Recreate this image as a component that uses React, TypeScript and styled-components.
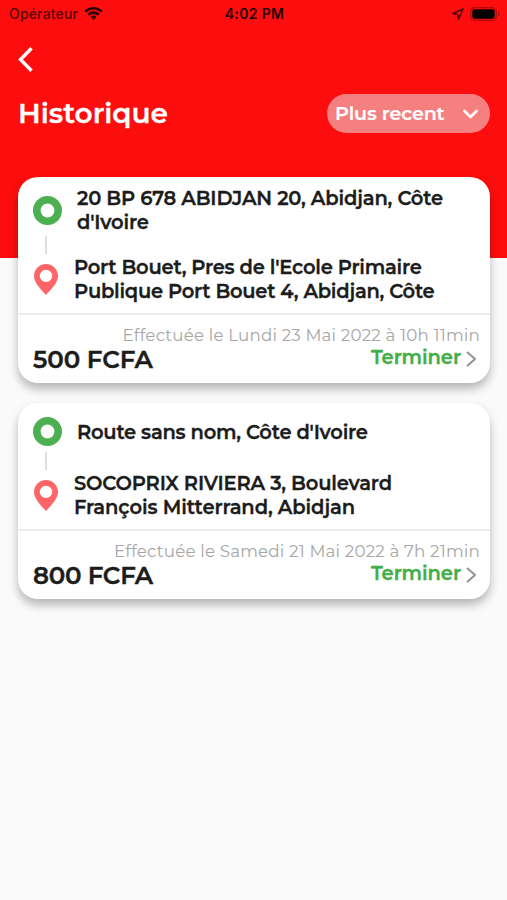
import React from "react";
import styled, { createGlobalStyle } from "styled-components";

const GlobalStyle = createGlobalStyle`
  * { box-sizing: border-box; }
  body { margin: 0; background: #fafafa; font-family: Montserrat, Inter, sans-serif; color: #1c1c1c; }
`;

const Screen = styled.main`
  min-height: 900px;
  background: linear-gradient(#fd0d0d 258px, #fafafa 258px);
`;

const StatusBar = styled.div`
  display: grid;
  grid-template-columns: 1fr auto 1fr;
  align-items: center;
  height: 27px;
  padding: 0 7px 0 9px;
  font: 500 14px/27px Inter, sans-serif;
`;

const Carrier = styled.div`
  display: flex;
  align-items: center;
  gap: 6px;
  letter-spacing: 0.17px;
  color: #5c0505;
`;

const Clock = styled.div`
  font-weight: 600;
  letter-spacing: 0.35px;
  color: #260000;
`;

const Indicators = styled.div`
  display: flex;
  align-items: center;
  justify-content: flex-end;
  gap: 6px;
`;

const BackButton = styled.button`
  display: block;
  width: 15px;
  height: 26px;
  margin: 19px 0 0 18px;
  padding: 0;
  border: 0;
  background: none;
  svg { display: block; }
`;

const TitleRow = styled.header`
  display: flex;
  align-items: center;
  justify-content: space-between;
  height: 39px;
  margin: 22px 17px 44px 18px;
  color: #fff;
`;

const Title = styled.h1`
  margin: 0;
  font-size: 28px;
  font-weight: 600;
  line-height: 39px;
  -webkit-text-stroke: 0.3px currentColor;
`;

const SortButton = styled.button`
  display: flex;
  align-items: center;
  justify-content: space-between;
  width: 163px;
  height: 39px;
  padding: 0 12px 0 8px;
  border: 0;
  border-radius: 20px;
  background: #f67f7f;
  color: #fff;
  font: 600 19px/38px Montserrat, Inter, sans-serif;
  letter-spacing: -0.1px;
  -webkit-text-stroke: 0.2px currentColor;
`;

const TripList = styled.section`
  display: flex;
  flex-direction: column;
  gap: 20px;
  padding: 0 17px 0 18px;
`;

const Card = styled.article`
  border-radius: 20px;
  background: #fff;
  box-shadow: 0 6px 10px rgba(0, 0, 0, 0.27);
`;

const Route = styled.div`
  display: grid;
  grid-template-columns: 56px 1fr;
  align-items: center;
  padding: 9px 0;
  border-bottom: 2px solid #ebebeb;
`;

const Marker = styled.div<{ $origin?: boolean }>`
  display: flex;
  justify-content: center;
  padding-left: ${(p) => (p.$origin ? 2 : 0)}px;
  svg { display: block; }
`;

const Connector = styled.div`
  grid-column: 1 / -1;
  width: 2px;
  height: 18px;
  margin: 1px 0 1px 27px;
  background: #dedede;
`;

const Address = styled.div<{ $lines: number; $origin?: boolean }>`
  display: flex;
  flex-direction: column;
  height: ${(p) => (p.$lines > 1 ? 49 : 39)}px;
  padding-top: ${(p) => (p.$lines > 1 ? 0 : 8)}px;
  padding-left: ${(p) => (p.$origin ? 3 : 0)}px;
  font-size: 19.5px;
  font-weight: 600;
  line-height: 24.4px;
  -webkit-text-stroke: 0.3px currentColor;
`;

const Line = styled.span<{ $track: number }>`
  align-self: flex-start;
  white-space: nowrap;
  letter-spacing: ${(p) => p.$track}px;
`;

const Footer = styled.footer`
  height: 68px;
  padding: 8px 10px 0 15px;
`;

const DateText = styled.div`
  height: 24px;
  text-align: right;
  white-space: nowrap;
  font-size: 16.7px;
  font-weight: 400;
  line-height: 24px;
  letter-spacing: 0.18px;
  color: #a6a6a6;
`;

const Summary = styled.div`
  display: flex;
  justify-content: space-between;
`;

const Amount = styled.div<{ $track: number }>`
  font-size: 24.5px;
  font-weight: 600;
  line-height: 24px;
  letter-spacing: ${(p) => p.$track}px;
  -webkit-text-stroke: 0.4px currentColor;
`;

const Status = styled.div`
  display: flex;
  align-items: center;
  gap: 5px;
  height: 20px;
  padding-right: 4px;
  color: #43ad49;
  font-size: 19.5px;
  font-weight: 600;
  letter-spacing: -0.1px;
  -webkit-text-stroke: 0.3px currentColor;
  svg { margin-top: 4px; }
`;

interface AddressLine {
  text: string;
  track: number;
}

interface Trip {
  from: AddressLine[];
  to: AddressLine[];
  date: string;
  amount: string;
  amountTrack: number;
}

const trips: Trip[] = [
  {
    from: [
      { text: "20 BP 678 ABIDJAN 20, Abidjan, Côte", track: -0.17 },
      { text: "d'Ivoire", track: -0.2 },
    ],
    to: [
      { text: "Port Bouet, Pres de l'Ecole Primaire", track: -0.23 },
      { text: "Publique Port Bouet 4, Abidjan, Côte", track: -0.25 },
    ],
    date: "Effectuée le Lundi 23 Mai 2022 à 10h 11min",
    amount: "500 FCFA",
    amountTrack: -0.05,
  },
  {
    from: [{ text: "Route sans nom, Côte d'Ivoire", track: -0.24 }],
    to: [
      { text: "SOCOPRIX RIVIERA 3, Boulevard", track: -0.17 },
      { text: "François Mitterrand, Abidjan", track: -0.11 },
    ],
    date: "Effectuée le Samedi 21 Mai 2022 à 7h 21min",
    amount: "800 FCFA",
    amountTrack: -0.26,
  },
];

const WifiIcon = () => (
  <svg width="19" height="14" viewBox="0 0 19 14" fill="none" stroke="#300" strokeWidth="2.7">
    <path d="M1.2 4.600a12 12 0 0 1 16.6 0M4.2 7.800a7.700 7.700 0 0 1 10.6 0" />
    <path d="M9.5 13 6.600 10a4.200 4.200 0 0 1 5.800 0z" fill="#300" stroke="none" />
  </svg>
);

const LocationIcon = () => (
  <svg width="12" height="12" viewBox="0 0 12 12" fill="none" stroke="#500" strokeWidth="1.5" strokeLinejoin="round">
    <path d="M11 1 1 5.500l4.600.9L6.600 11z" />
  </svg>
);

const BatteryIcon = () => (
  <svg width="30" height="14" viewBox="0 0 30 14">
    <rect x=".7" y=".7" width="25.600" height="12.600" rx="4" fill="none" stroke="#b00a0a" strokeWidth="1.2" />
    <rect x="2.300" y="2.300" width="22.400" height="9.400" rx="2.400" fill="#000" />
    <path d="M28 5v4q1.500-.6 1.500-2T28 5" fill="#b00a0a" />
  </svg>
);

const OriginIcon = () => (
  <svg width="29" height="29" viewBox="0 0 29 29">
    <circle cx="14.500" cy="14.500" r="10.700" fill="none" stroke="#4caf50" strokeWidth="7.600" />
  </svg>
);

const PinIcon = () => (
  <svg width="24" height="31" viewBox="0 0 24 31">
    <path
      fillRule="evenodd"
      fill="#ff6468"
      d="M12 0C18.600 0 24 5.200 24 11.800c0 7-6 12.700-12 19.200C6 24.500 0 18.800 0 11.800 0 5.200 5.400 0 12 0m0 5.700a6.200 6.200 0 1 0 0 12.400 6.200 6.200 0 0 0 0-12.400"
    />
  </svg>
);

const Lines = ({ lines }: { lines: AddressLine[] }) => (
  <>
    {lines.map((line) => (
      <Line key={line.text} $track={line.track}>
        {line.text}
      </Line>
    ))}
  </>
);

const TripCard = ({ trip }: { trip: Trip }) => (
  <Card>
    <Route>
      <Marker $origin>
        <OriginIcon />
      </Marker>
      <Address $origin $lines={trip.from.length}>
        <Lines lines={trip.from} />
      </Address>
      <Connector />
      <Marker>
        <PinIcon />
      </Marker>
      <Address $lines={trip.to.length}>
        <Lines lines={trip.to} />
      </Address>
    </Route>
    <Footer>
      <DateText>{trip.date}</DateText>
      <Summary>
        <Amount $track={trip.amountTrack}>{trip.amount}</Amount>
        <Status>
          Terminer
          <svg width="10" height="16" viewBox="0 0 10 16" fill="none" stroke="#929292" strokeWidth="2">
            <path d="m1 1 8 7-8 7" />
          </svg>
        </Status>
      </Summary>
    </Footer>
  </Card>
);

export default function App() {
  return (
    <Screen>
      <GlobalStyle />
      <StatusBar>
        <Carrier>
          Opérateur
          <WifiIcon />
        </Carrier>
        <Clock>4:02 PM</Clock>
        <Indicators>
          <LocationIcon />
          <BatteryIcon />
        </Indicators>
      </StatusBar>
      <BackButton aria-label="Retour">
        <svg width="15" height="26" viewBox="0 0 15 26" fill="none" stroke="#fff" strokeWidth="3.400">
          <path d="M13.500 2.200 2.500 13.500l11 11.300" />
        </svg>
      </BackButton>
      <TitleRow>
        <Title>Historique</Title>
        <SortButton>
          Plus recent
          <svg width="15" height="10" viewBox="0 0 15 10" fill="none" stroke="#fff" strokeWidth="2.600" strokeLinecap="round" strokeLinejoin="round">
            <path d="m1.500 2 6 6 6-6" />
          </svg>
        </SortButton>
      </TitleRow>
      <TripList>
        {trips.map((trip) => (
          <TripCard key={trip.date} trip={trip} />
        ))}
      </TripList>
    </Screen>
  );
}
